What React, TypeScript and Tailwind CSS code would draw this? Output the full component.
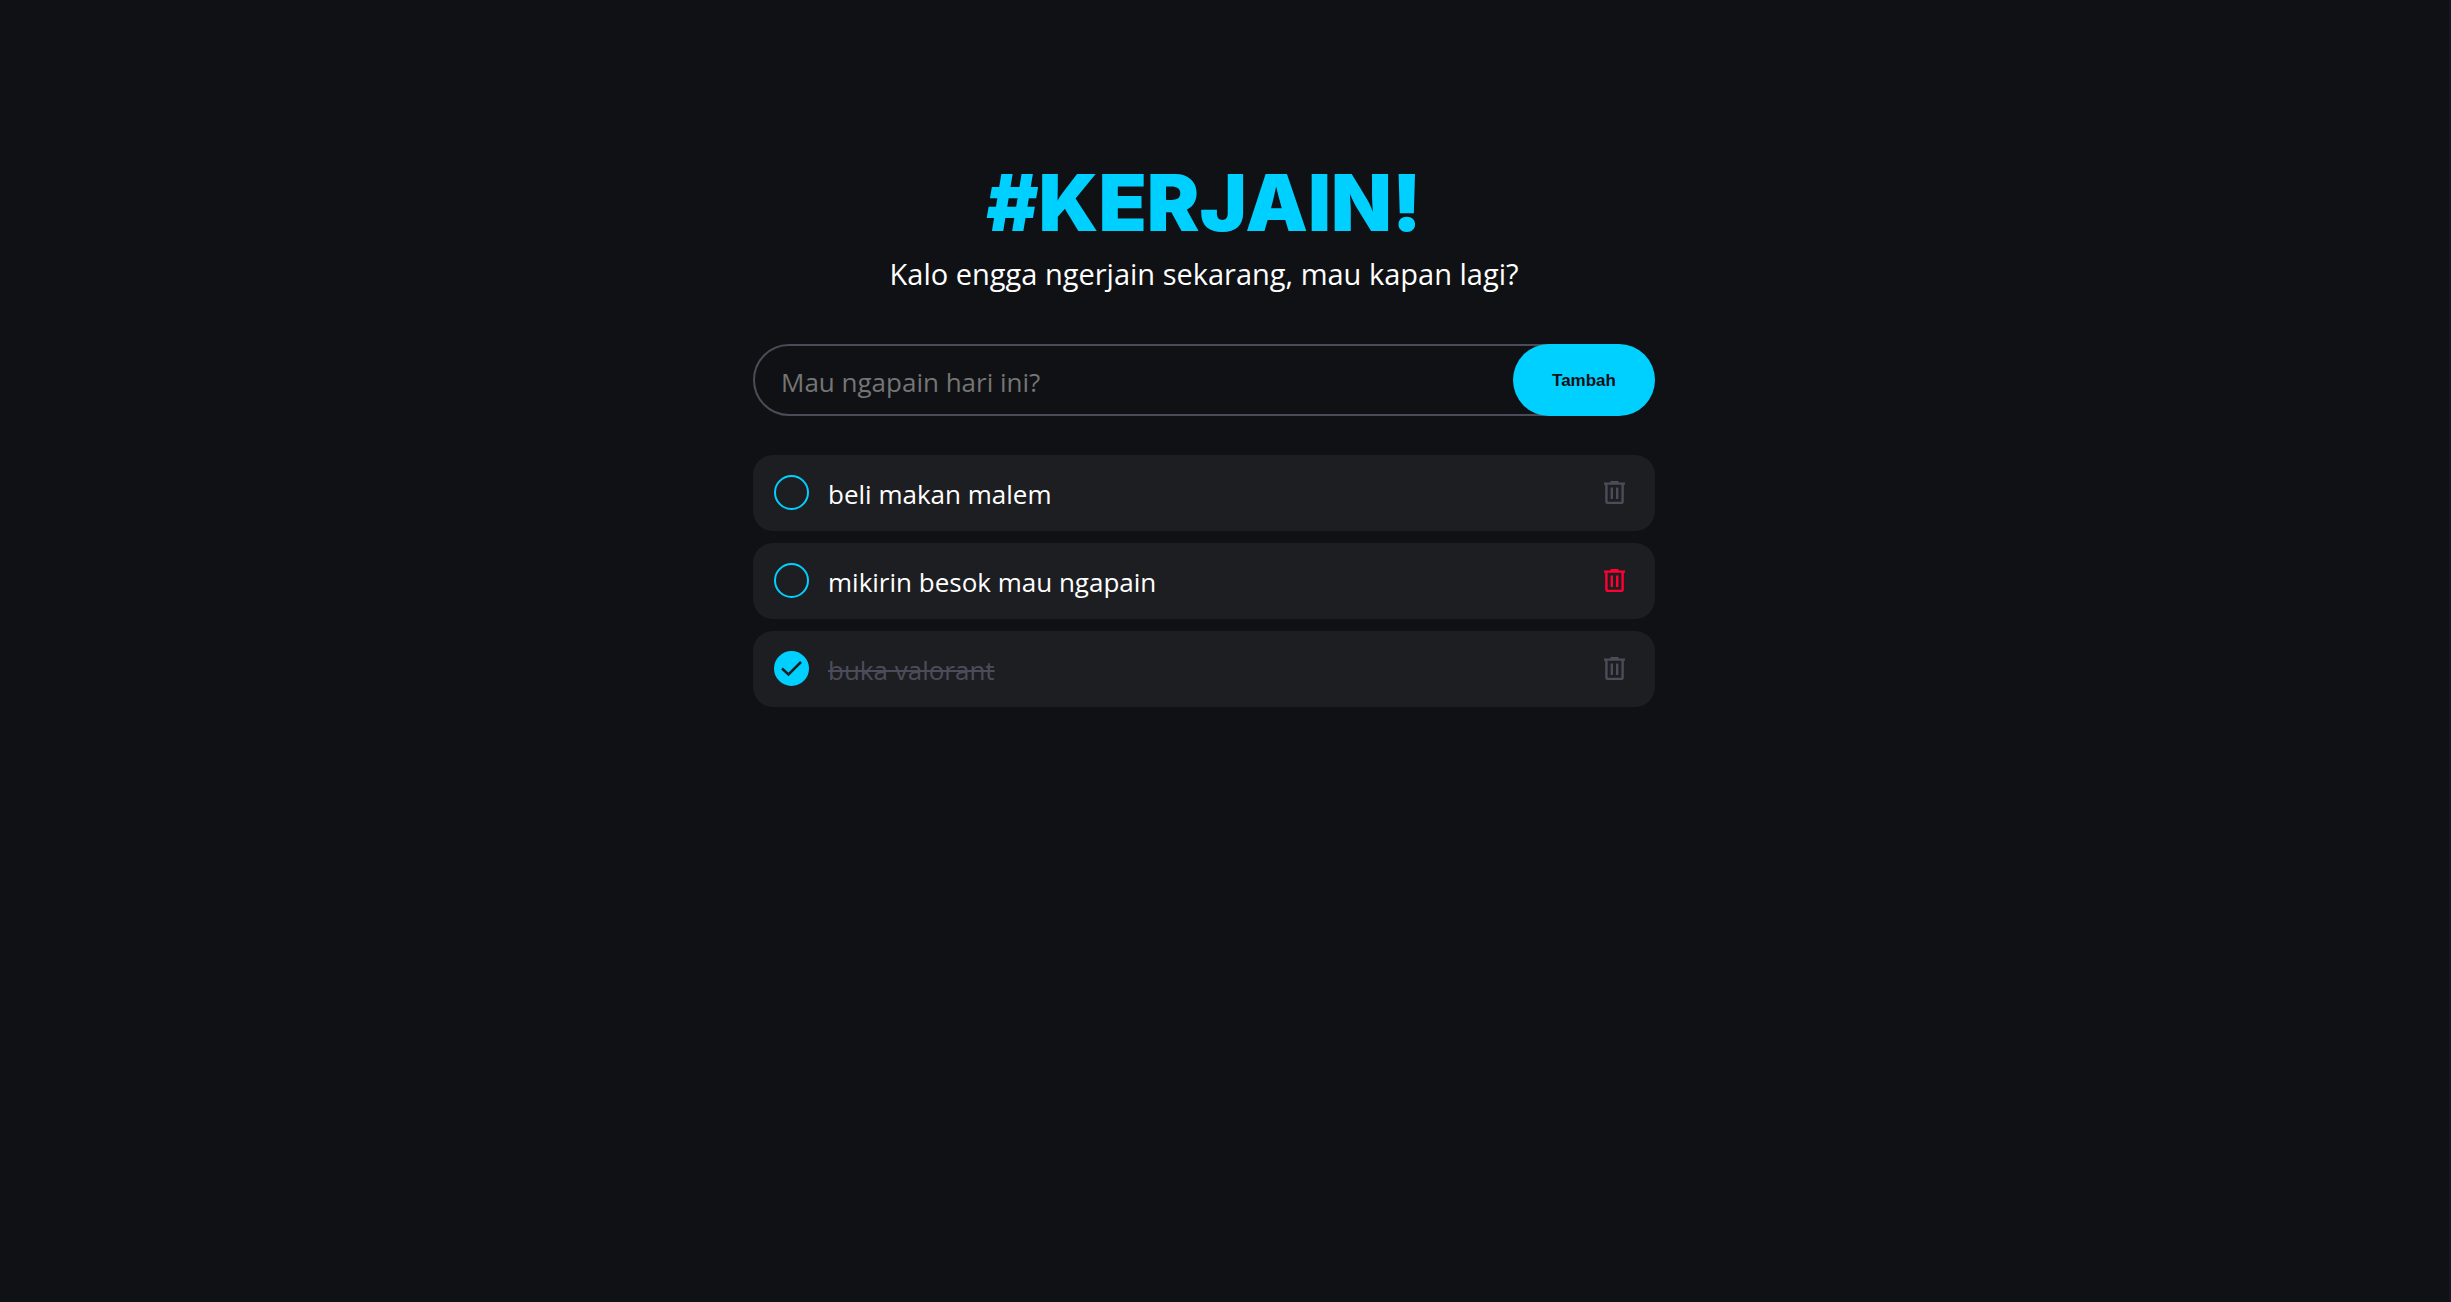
import { useState } from 'react';

type Task = { id: number; title: string; done: boolean; danger?: boolean };

const initialTasks: Task[] = [
  { id: 1, title: 'beli makan malem', done: false },
  { id: 2, title: 'mikirin besok mau ngapain', done: false, danger: true },
  { id: 3, title: 'buka valorant', done: true },
];

function TrashIcon() {
  return (
    <svg viewBox="0 0 21 23" className="h-[23px] w-[21px]" fill="none" aria-hidden="true">
      <path d="M6.500 1h8M0 2.700h21" stroke="currentColor" strokeWidth="2.200" />
      <path d="M2.400 3v17.500q0 1.400 1.400 1.400h13.400q1.400 0 1.400-1.400V3" stroke="currentColor" strokeWidth="2.400" />
      <path d="M7.800 6.500v11.500M13.200 6.500v11.500" stroke="currentColor" strokeWidth="2.400" />
    </svg>
  );
}

export default function App() {
  const [tasks, setTasks] = useState(initialTasks);
  const [title, setTitle] = useState('');

  const toggle = (id: number) =>
    setTasks(tasks.map((t) => (t.id === id ? { ...t, done: !t.done } : t)));

  const add = () => {
    if (!title.trim()) return;
    setTasks([{ id: Date.now(), title, done: false }, ...tasks]);
    setTitle('');
  };

  return (
    <div className="min-h-screen border-r-2 border-[#141824] bg-[#101114] pt-[150px] pr-[41px] font-['Open_Sans',sans-serif] text-white">
      <main className="mx-auto w-full max-w-[902px]">
        <header className="text-center">
          <h1 className="font-['Inter',sans-serif] text-[79px] leading-[104px] font-black text-[#00d0ff]">#KERJAIN!</h1>
          <p className="text-[29px] leading-[40px]">Kalo engga ngerjain sekarang, mau kapan lagi?</p>
        </header>

        <form
          className="mt-[50px] flex h-[72px]"
          onSubmit={(e) => {
            e.preventDefault();
            add();
          }}
        >
          <input
            type="text"
            aria-label="Mau ngapain hari ini?"
            placeholder="Mau ngapain hari ini?"
            value={title}
            onChange={(e) => setTitle(e.target.value)}
            className="-mr-[72px] min-w-0 flex-1 rounded-full border-2 border-[#4c4c59] bg-[#101114] pt-1 pr-20 pl-[26px] text-[26px] outline-none placeholder:text-[#757575]"
          />
          <button
            type="submit"
            className="z-10 w-[142px] rounded-full bg-[#00d0ff] pt-0.5 font-['Liberation_Sans',Arial,sans-serif] text-[17px] font-bold text-[#101114]"
          >
            Tambah
          </button>
        </form>

        <ul className="mt-[39px] flex flex-col gap-3">
          {tasks.map((task) => (
            <li key={task.id} className="flex h-[76px] items-center rounded-[20px] bg-[#1d1e22] pr-[30px] pb-px pl-[21px]">
              <label className="flex min-w-0 flex-1 cursor-pointer items-center gap-[19px]">
                <span className="grid shrink-0">
                  <input
                    type="checkbox"
                    checked={task.done}
                    onChange={() => toggle(task.id)}
                    className="col-start-1 row-start-1 size-[35px] appearance-none rounded-full border-2 border-[#00d0ff] checked:bg-[#00d0ff]"
                  />
                  {task.done && (
                    <svg viewBox="0 0 35 35" className="pointer-events-none col-start-1 row-start-1 size-[35px]" fill="none" aria-hidden="true">
                      <path d="M8 17.500l6.500 6L27 11" stroke="#1d1e22" strokeWidth="2.500" />
                    </svg>
                  )}
                </span>
                <span className={task.done ? 'pt-1 text-[26px] text-[#4c4c59] line-through decoration-2' : 'pt-1 text-[26px]'}>
                  {task.title}
                </span>
              </label>
              <button
                type="button"
                aria-label={`Hapus ${task.title}`}
                onClick={() => setTasks(tasks.filter((t) => t.id !== task.id))}
                className={task.danger ? 'text-[#ff0033]' : 'text-[#4c4c59] hover:text-[#ff0033]'}
              >
                <TrashIcon />
              </button>
            </li>
          ))}
        </ul>
      </main>
    </div>
  );
}
